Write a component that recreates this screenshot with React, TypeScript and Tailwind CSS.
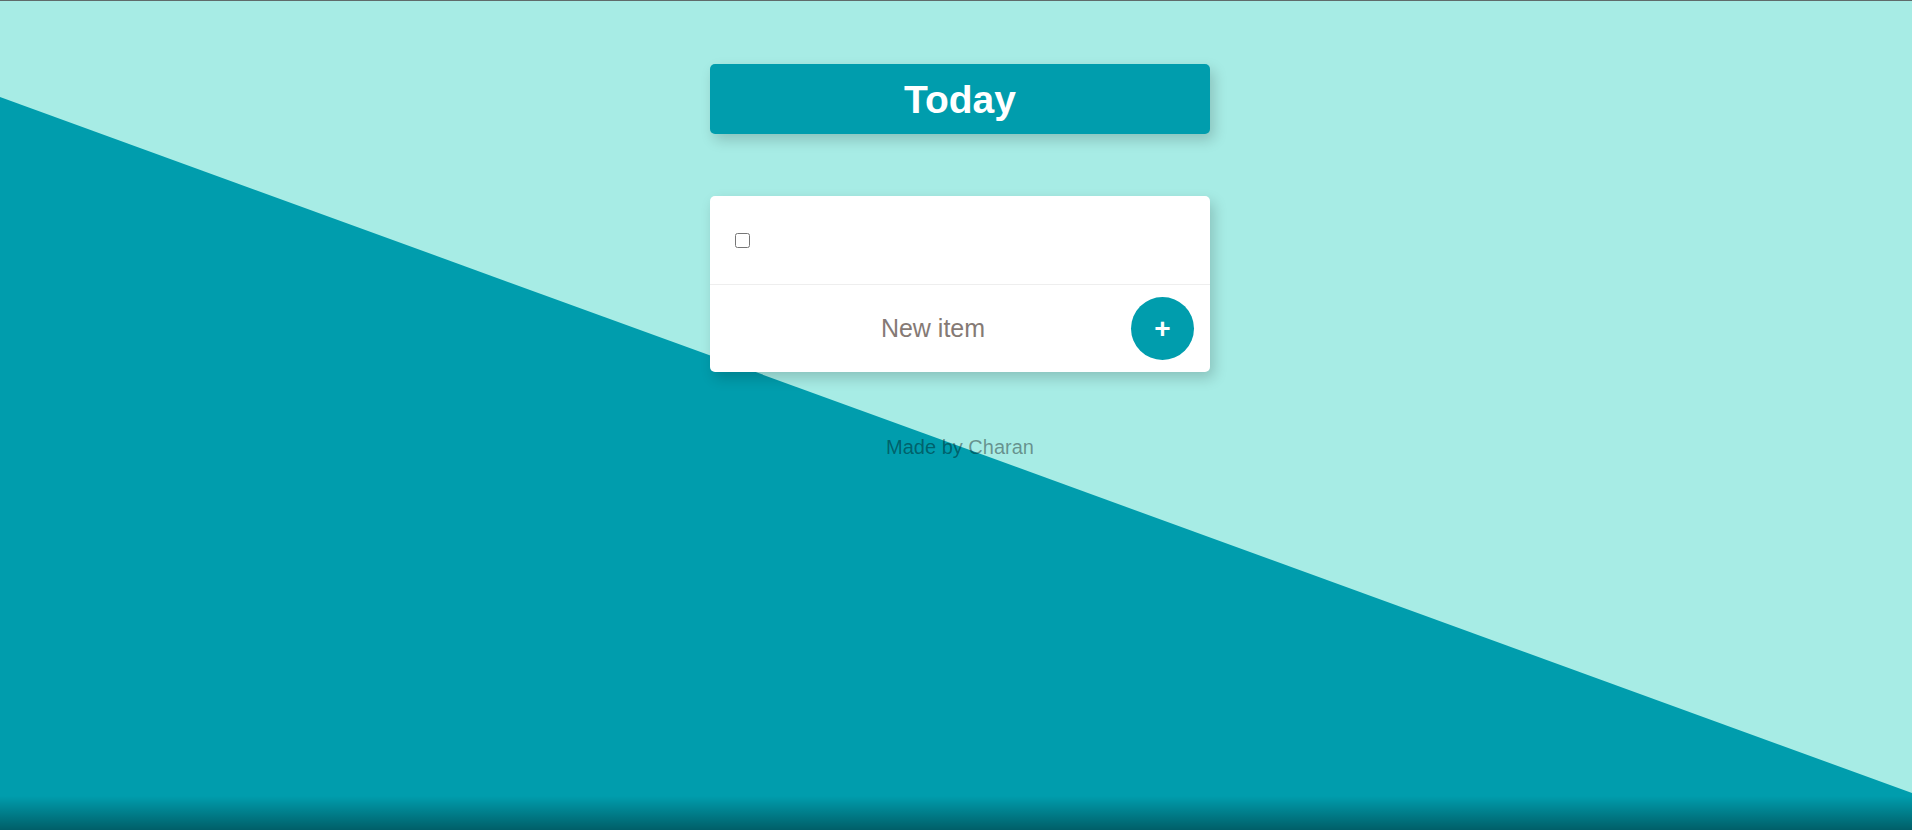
import React from 'react';

export default function App() {
  return (
    <div className="relative h-screen w-full overflow-hidden bg-[#a7ece5] border-t border-[#5f6b6b] font-['Liberation_Sans',Arial,sans-serif]">
      {/* diagonal backdrop */}
      <div className="absolute inset-0 bg-[#009dad] [clip-path:polygon(0_96px,100%_792px,100%_100%,0_100%)]" />
      <div className="absolute bottom-0 left-0 right-0 h-[34px] bg-gradient-to-b from-transparent to-[rgba(0,0,0,0.4)]" />

      <div className="relative flex flex-col items-center pt-[63px] pl-[8px]">
        <div className="w-[500px] h-[70px] rounded-[5px] bg-[#009dad] flex items-center justify-center shadow-[4px_6px_14px_rgba(0,0,0,0.18)]">
          <h1 className="text-white text-[39px] font-bold leading-none">Today</h1>
        </div>

        <div className="mt-[62px] w-[500px] rounded-[5px] bg-white shadow-[4px_6px_14px_rgba(0,0,0,0.18)]">
          <div className="h-[89px] flex items-center pl-[25px] border-b border-[#eeeeee]">
            <input type="checkbox" className="w-[15px] h-[15px] m-0" />
          </div>
          <form className="h-[87px] flex items-center pl-[25px] pr-[16px]" onSubmit={(e) => e.preventDefault()}>
            <input
              type="text"
              placeholder="New item"
              className="flex-1 min-w-0 text-center text-[25px] outline-none bg-transparent placeholder:text-[#857a75] text-[#857a75]"
            />
            <button
              type="submit"
              className="w-[63px] h-[63px] rounded-full bg-[#009dad] text-white text-[28px] font-semibold flex items-center justify-center leading-none"
            >
              +
            </button>
          </form>
        </div>

        <p className="mt-[64px] text-[20px] leading-[22px] text-[rgba(0,0,0,0.4)]">Made by Charan</p>
      </div>
    </div>
  );
}
